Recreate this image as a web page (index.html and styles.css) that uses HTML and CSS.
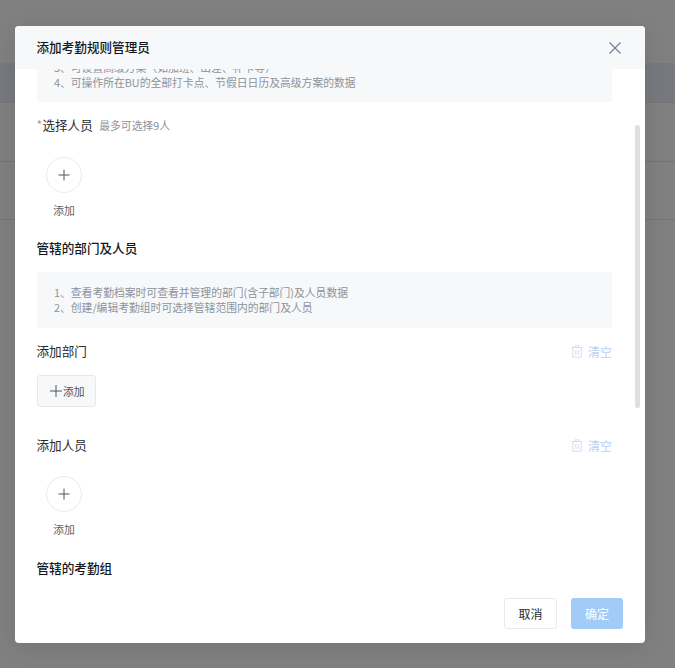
FILE: index.html
```html
<!DOCTYPE html>
<html lang="zh-CN">
<head>
<meta charset="utf-8">
<title>添加考勤规则管理员</title>
<link rel="stylesheet" href="styles.css">
</head>
<body>
<div class="page">
  <div class="page-band"></div>
  <div class="page-row"></div>
  <div class="page-row"></div>
</div>
<div class="modal">
  <header class="modal-head">
    <h2 class="modal-title">添加考勤规则管理员</h2>
    <svg class="close" width="14" height="14" viewBox="0 0 14 14"><path d="M1.500 1.500l11 11M12.500 1.500l-11 11" stroke="#6f8298" stroke-width="1.200" fill="none"/></svg>
  </header>
  <div class="modal-body">
    <div class="scroll-thumb"></div>
    <div class="content">
      <div class="note note-first">
        <div>3、可设置高级方案（如加班、出差、补卡等）</div>
        <div>4、可操作所在BU的全部打卡点、节假日日历及高级方案的数据</div>
      </div>
      <div class="field-label pick-label"><span class="req">*</span>选择人员<span class="hint">最多可选择9人</span></div>
      <div class="adder">
        <div class="adder-circle"><svg width="14" height="14" viewBox="0 0 14 14"><path d="M7 1.500v11M1.500 7h11" stroke="#4a5564" stroke-width="1" fill="none"/></svg></div>
        <div class="adder-text">添加</div>
      </div>
      <h3 class="section">管辖的部门及人员</h3>
      <div class="note note-second">
        <div>1、查看考勤档案时可查看并管理的部门(含子部门)及人员数据</div>
        <div>2、创建/编辑考勤组时可选择管辖范围内的部门及人员</div>
      </div>
      <div class="row-head dept-head">
        <span class="field-label">添加部门</span>
        <span class="clear"><svg width="12" height="13" viewBox="0 0 12 13"><path d="M.5 2.500h11M4 2.500V.8h4v1.700M1.800 2.500v9.700h8.400V2.500M4.800 5v5M7.200 5v5" stroke="#d5dcf5" fill="none"/></svg>清空</span>
      </div>
      <button class="add-btn"><svg width="12" height="12" viewBox="0 0 12 12"><path d="M6 0v12M0 6h12" stroke="#4a5564" fill="none"/></svg>添加</button>
      <div class="row-head person-head">
        <span class="field-label">添加人员</span>
        <span class="clear"><svg width="12" height="13" viewBox="0 0 12 13"><path d="M.5 2.500h11M4 2.500V.8h4v1.700M1.800 2.500v9.700h8.400V2.500M4.800 5v5M7.200 5v5" stroke="#d5dcf5" fill="none"/></svg>清空</span>
      </div>
      <div class="adder adder-second">
        <div class="adder-circle"><svg width="14" height="14" viewBox="0 0 14 14"><path d="M7 1.500v11M1.500 7h11" stroke="#4a5564" stroke-width="1" fill="none"/></svg></div>
        <div class="adder-text">添加</div>
      </div>
      <h3 class="section section-last">管辖的考勤组</h3>
    </div>
  </div>
  <footer class="modal-foot">
    <button class="btn btn-cancel">取消</button>
    <button class="btn btn-ok">确定</button>
  </footer>
</div>
</body>
</html>
```
FILE: styles.css
```css
* { box-sizing: border-box; }
html, body { margin: 0; height: 100%; overflow: hidden; }
body {
  background: #808080;
  font-family: "Noto Sans CJK SC", "Liberation Sans", sans-serif;
  color: #1f2329;
}
.page { padding-top: 63px; }
.page-band { height: 40px; background: #767a7f; border-bottom: 1px solid #767676; }
.page-row { height: 58.5px; border-bottom: 1px solid #747474; }
.modal {
  position: absolute;
  left: 15px;
  top: 26px;
  width: 630px;
  height: 617px;
  background: #fff;
  border-radius: 4px;
  box-shadow: 0 4px 24px rgba(0, 0, 0, .1);
  display: flex;
  flex-direction: column;
  overflow: hidden;
}
.modal-head {
  height: 43px;
  flex: none;
  background: #f7f8fa;
  display: flex;
  align-items: center;
  justify-content: space-between;
  padding: 0 23px 0 21.5px;
}
.modal-title { margin: -2px 0 0; font-size: 12.6px; line-height: 41px; font-weight: 500; color: #14171c; }
.close { display: block; }
.modal-body { position: relative; flex: 1; overflow: hidden; }
.scroll-thumb {
  position: absolute;
  right: 5px;
  top: 56px;
  width: 5px;
  height: 283px;
  border-radius: 3px;
  background: #dedfe1;
}
.content { padding: 0 33px 0 22px; }
.note {
  background: #f7f8fa;
  border-radius: 3px;
  font-size: 10.8px;
  line-height: 15px;
  color: #8d939b;
  padding-left: 17px;
}
.note-first { margin-top: -15px; height: 48px; padding-top: 6px; }
.note-second { margin-top: 14px; height: 56px; padding-top: 13px; }
.field-label { font-size: 12.6px; line-height: 18px; color: #262a30; }
.row-head .field-label { margin-left: -.5px; }
.pick-label { margin-top: 14px; margin-left: -.5px; }
.req { color: #f0808a; }
.hint { font-size: 10.8px; color: #8d939b; margin-left: 6.500px; }
.adder { width: 54px; margin-top: 23px; display: flex; flex-direction: column; align-items: center; }
.adder-second { margin-top: 21px; }
.adder-circle {
  width: 36px;
  height: 36px;
  border: 1px solid #e6eaee;
  border-radius: 50%;
  display: flex;
  align-items: center;
  justify-content: center;
}
.adder-text { font-size: 10.8px; line-height: 16px; color: #5d636b; margin-top: 9px; }
.section { margin: 20px 0 0 -.5px; font-size: 12.6px; line-height: 20px; font-weight: 500; color: #14171c; }
.section-last { margin-top: 21px; }
.row-head { display: flex; justify-content: space-between; align-items: center; height: 20px; }
.dept-head { margin-top: 13px; }
.person-head { margin-top: 28px; }
.clear { display: flex; align-items: center; gap: 5px; font-size: 12px; color: #b7d0f5; }
.add-btn {
  display: flex;
  align-items: center;
  gap: 1px;
  margin-top: 14px;
  width: 59px;
  height: 32px;
  padding: 0 0 0 12px;
  background: #f7f8fa;
  border: 1px solid #e6e8ec;
  border-radius: 3px;
  font: 10.8px "Noto Sans CJK SC", sans-serif;
  color: #4a5564;
}
.modal-foot {
  flex: none;
  height: 58px;
  display: flex;
  justify-content: flex-end;
  gap: 14px;
  padding: 13px 22px 0 0;
}
.btn { height: 31px; border-radius: 3px; font: 12px "Noto Sans CJK SC", sans-serif; padding: 0; }
.btn-cancel { width: 53px; background: #fff; border: 1px solid #e8ebee; color: #262a30; }
.btn-ok { width: 52px; background: #a3cbf8; border: 0; color: #fff; }
```
